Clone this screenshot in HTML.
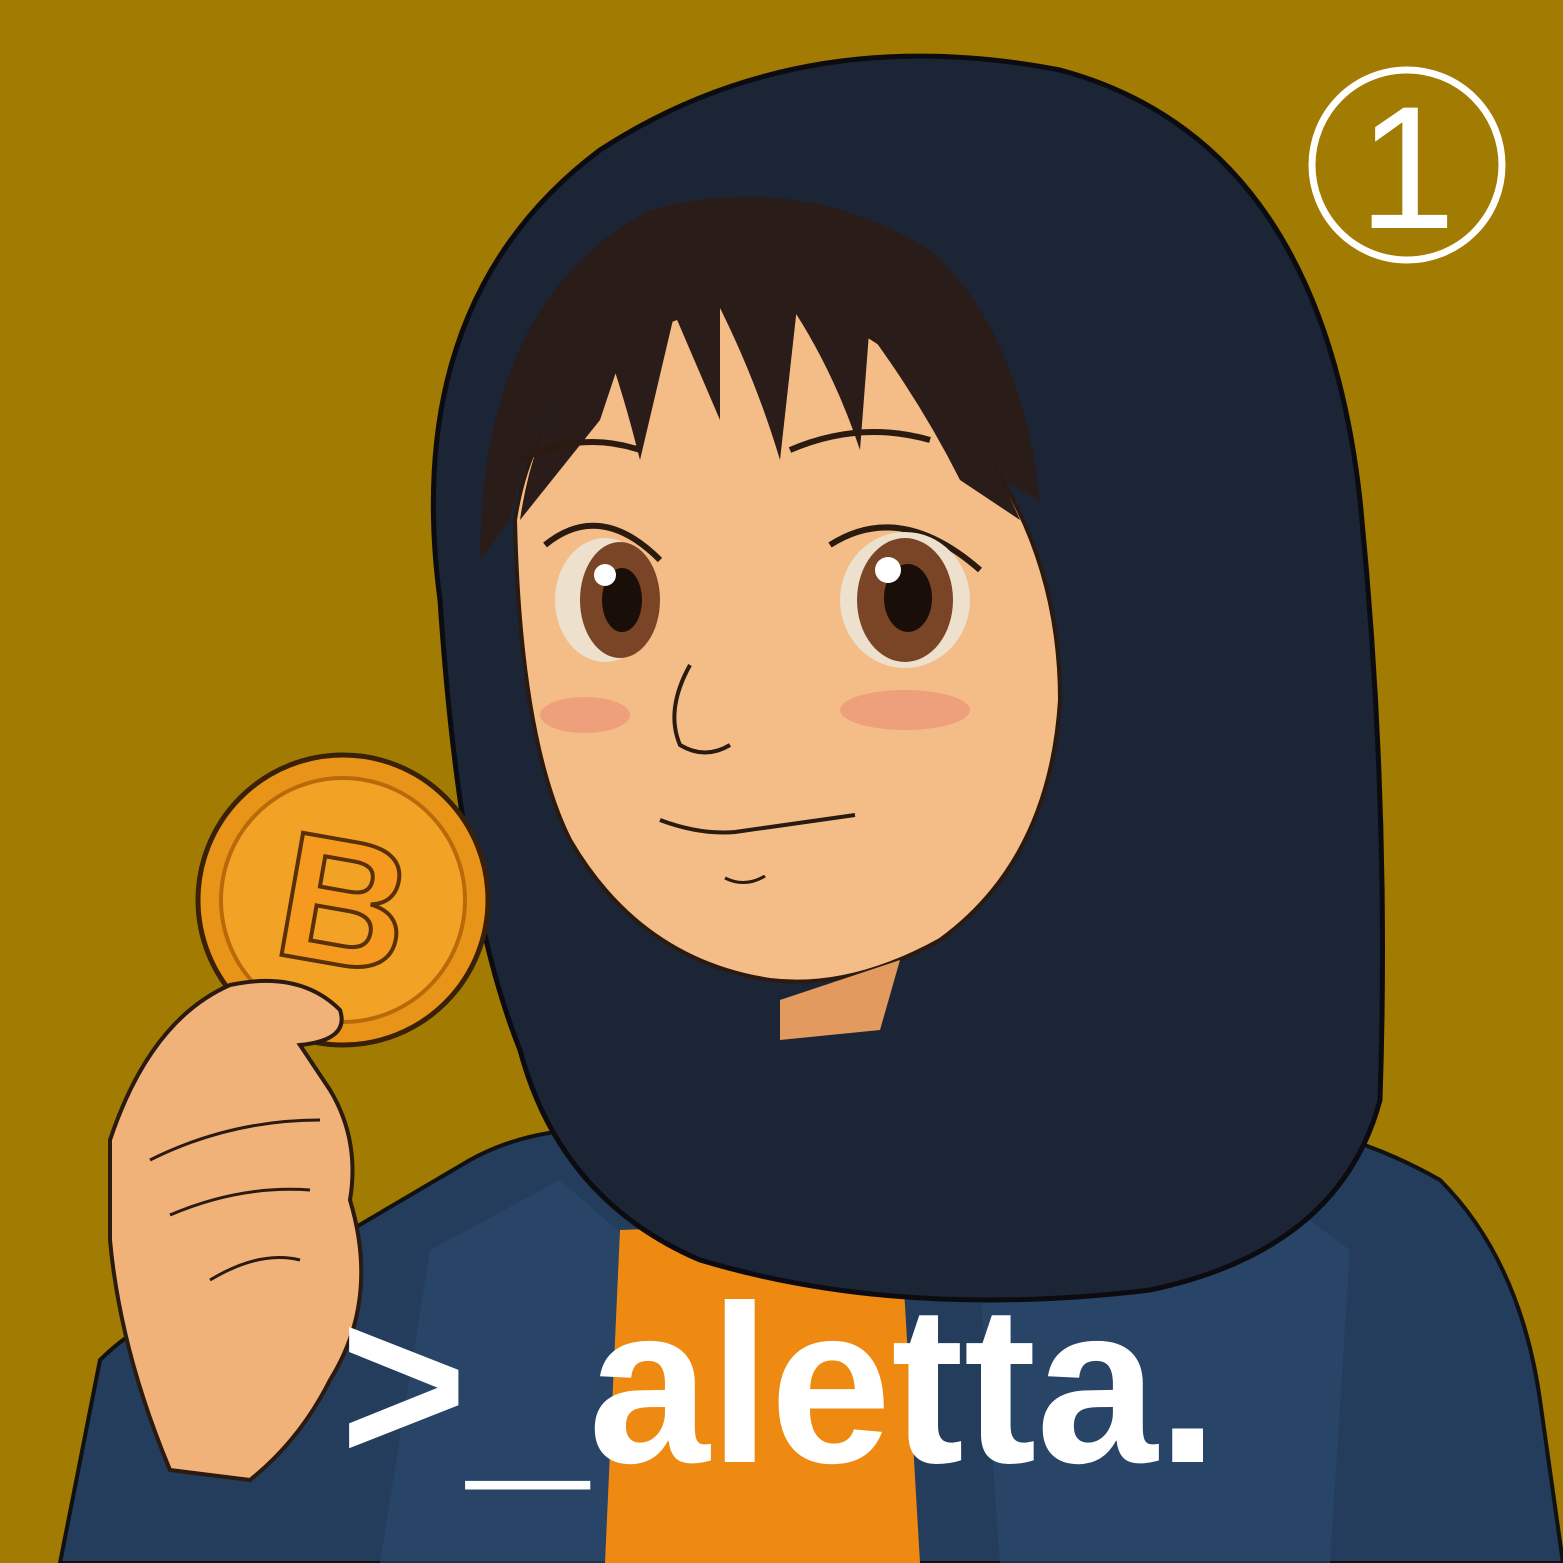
<!DOCTYPE html>
<html><head><meta charset="utf-8"><style>
html,body{margin:0;padding:0;background:#A17B02;}
svg{display:block}
</style></head><body>
<svg width="1563" height="1563" viewBox="0 0 1563 1563" xmlns="http://www.w3.org/2000/svg">
<rect width="1563" height="1563" fill="#A17B02"/>
<!-- jacket -->
<path d="M60 1563 L100 1360 Q160 1300 300 1260 L470 1160 Q560 1110 700 1140 L1100 1110 Q1300 1100 1440 1180 Q1520 1260 1540 1400 L1563 1563 Z" fill="#243D5C" stroke="#111" stroke-width="4"/>
<path d="M380 1563 L430 1250 L560 1180 L640 1250 L610 1563 Z" fill="#2b4a6e" opacity="0.6"/>
<path d="M1000 1563 L980 1280 L1200 1140 L1350 1250 L1330 1563 Z" fill="#2b4a6e" opacity="0.6"/>
<!-- shirt -->
<path d="M620 1230 L900 1220 L920 1563 L605 1563 Z" fill="#EE8A12"/>
<!-- hijab -->
<path d="M440 600 Q400 300 600 150 Q800 20 1060 70 Q1320 140 1360 500 Q1390 800 1380 1100 Q1340 1250 1150 1290 Q900 1320 700 1260 Q560 1200 520 1050 Q460 900 440 600 Z" fill="#1B2536" stroke="#0c0c10" stroke-width="5"/>
<!-- hair back -->
<path d="M480 560 Q480 300 650 210 Q800 170 930 250 Q1020 330 1040 500 L1000 480 Q940 380 870 330 Q760 280 640 320 Q540 380 510 520 Z" fill="#2A1C18"/>
<!-- face -->
<path d="M515 520 Q530 420 600 360 Q680 300 780 300 Q880 320 960 420 Q1060 540 1060 700 Q1050 860 940 940 Q850 990 770 980 Q640 960 570 840 Q520 740 515 520 Z" fill="#F4BC86" stroke="#2a1a10" stroke-width="4"/>
<!-- fringe strands -->
<g fill="#2A1C18">
<path d="M520 520 Q540 380 640 300 L600 420 Z"/>
<path d="M600 330 Q640 300 680 290 L640 460 Q620 380 600 330 Z"/>
<path d="M660 280 L720 270 L720 420 Z"/>
<path d="M700 270 L800 280 L780 460 Q750 360 700 270 Z"/>
<path d="M780 290 L870 320 L860 450 Q830 360 780 290 Z"/>
<path d="M860 320 Q960 380 1020 520 L960 480 Q920 400 860 320 Z"/>
</g>
<!-- eyes -->
<g stroke="#2a1a10" stroke-width="6" fill="none">
<path d="M520 460 Q580 430 640 450"/>
<path d="M790 450 Q860 420 930 440"/>
<path d="M545 545 Q600 500 660 560"/>
<path d="M830 545 Q900 500 980 570"/>
</g>
<ellipse cx="605" cy="600" rx="50" ry="62" fill="#EDE0CC"/>
<ellipse cx="620" cy="600" rx="40" ry="58" fill="#7A4526"/>
<ellipse cx="622" cy="600" rx="20" ry="32" fill="#1a0e08"/>
<circle cx="605" cy="575" r="11" fill="#fff"/>
<ellipse cx="905" cy="600" rx="65" ry="68" fill="#EDE0CC"/>
<ellipse cx="905" cy="600" rx="48" ry="62" fill="#7A4526"/>
<ellipse cx="908" cy="598" rx="24" ry="34" fill="#1a0e08"/>
<circle cx="888" cy="570" r="13" fill="#fff"/>
<!-- blush -->
<ellipse cx="585" cy="715" rx="45" ry="18" fill="#E88E74" opacity="0.6"/>
<ellipse cx="905" cy="710" rx="65" ry="20" fill="#E88E74" opacity="0.6"/>
<!-- nose, mouth -->
<path d="M690 665 Q665 710 680 745 Q705 760 730 745" stroke="#2a1a10" stroke-width="4" fill="none"/>
<path d="M660 820 Q700 835 735 832 L855 815" stroke="#2a1a10" stroke-width="4" fill="none"/>
<path d="M725 878 Q745 888 765 876" stroke="#2a1a10" stroke-width="3" fill="none"/>
<!-- neck -->
<path d="M780 1000 L900 960 L880 1030 L780 1040 Z" fill="#E29A5E"/>
<!-- coin -->
<circle cx="343" cy="900" r="145" fill="#E89418" stroke="#3a2008" stroke-width="5"/>
<circle cx="343" cy="900" r="122" fill="#F2A326" stroke="#B86A0A" stroke-width="4"/>
<text x="345" y="965" text-anchor="middle" font-family="Liberation Sans, sans-serif" font-weight="bold" font-size="180" fill="#F59A1E" stroke="#5a3008" stroke-width="4" transform="rotate(10 345 900)">B</text>
<!-- hand -->
<path d="M110 1140 Q150 1020 230 985 Q300 970 340 1010 Q350 1040 300 1045 L330 1090 Q360 1140 350 1200 Q380 1300 330 1380 Q300 1440 250 1480 L170 1470 Q120 1350 110 1240 Z" fill="#F1B27A" stroke="#2a1a10" stroke-width="4"/>
<g stroke="#2a1a10" stroke-width="3" fill="none">
<path d="M150 1160 Q230 1120 320 1120"/>
<path d="M170 1215 Q240 1185 310 1190"/>
<path d="M210 1280 Q260 1250 300 1260"/>
</g>
<!-- text -->
<text x="340" y="1462" textLength="878" lengthAdjust="spacingAndGlyphs" font-family="Liberation Sans, Arial, sans-serif" font-weight="bold" font-size="225" fill="#fff">&gt;_aletta.</text>
<!-- circled 1 -->
<circle cx="1407" cy="165" r="95" fill="none" stroke="#fff" stroke-width="7"/>
<text x="1407" y="228" text-anchor="middle" font-family="Liberation Sans, sans-serif" font-size="175" fill="#fff">1</text>
</svg>
</body></html>
